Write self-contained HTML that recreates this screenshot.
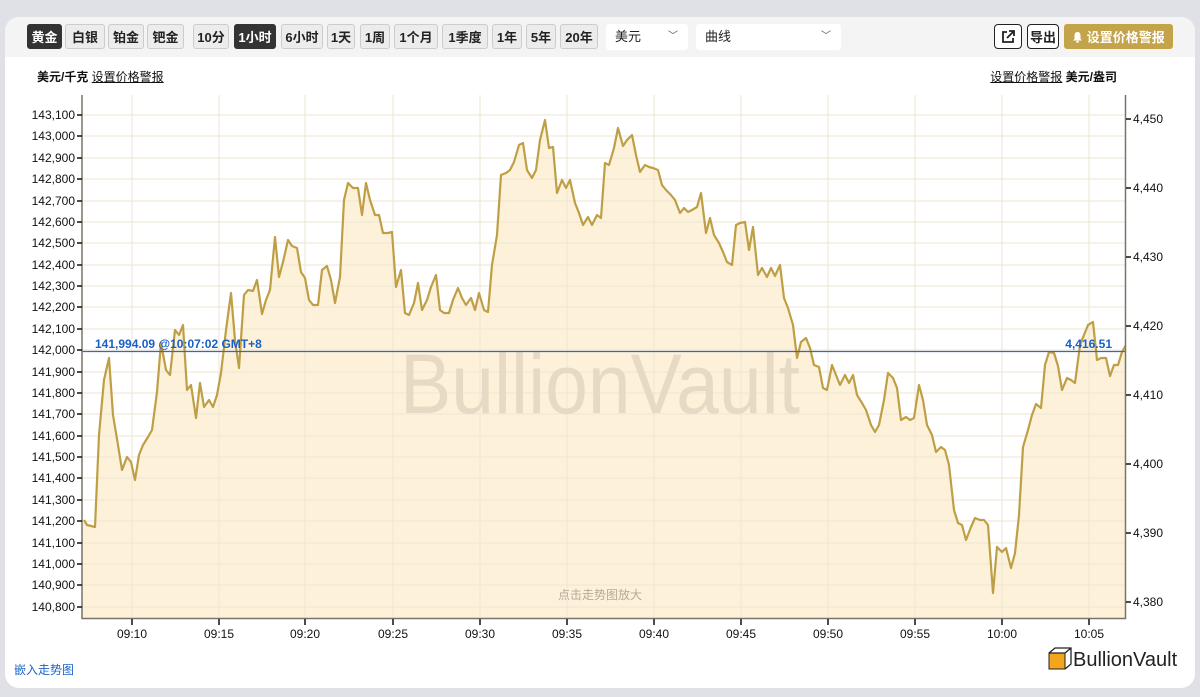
<!DOCTYPE html>
<html><head><meta charset="utf-8"><style>
body{margin:0;width:1200px;height:697px;background:#e0e1e6;overflow:hidden;font-family:"Liberation Sans","Noto Sans CJK SC",sans-serif}
.card{position:absolute;left:5px;top:17px;width:1190px;height:671px;background:#fff;border-radius:14px;overflow:hidden}
.bar{position:absolute;left:0;top:0;width:1190px;height:40px;background:#f4f4f4}
.b{position:absolute;top:7px;height:25px;line-height:25px;border:1px solid #ccc;border-radius:3px;background:#ececec;font-size:13px;font-weight:bold;color:#222;text-align:center;box-sizing:border-box}
.on{background:#333;color:#fff;border-color:#333}
.sel{position:absolute;top:7px;height:26px;background:#fff;border-radius:3px;font-size:13px;line-height:26px;padding-left:9px;box-sizing:border-box;color:#222}
.sel span{position:absolute;right:10px;top:0;font-size:10px;color:#555}
</style></head><body>
<div class="card">
<div class="bar">
<div class="b on" style="left:22px;width:35px">黄金</div>
<div class="b" style="left:60px;width:40px">白银</div>
<div class="b" style="left:103px;width:36px">铂金</div>
<div class="b" style="left:142px;width:37px">钯金</div>
<div class="b" style="left:188px;width:36px">10分</div>
<div class="b on" style="left:229px;width:42px">1小时</div>
<div class="b" style="left:276px;width:42px">6小时</div>
<div class="b" style="left:322px;width:28px">1天</div>
<div class="b" style="left:355px;width:30px">1周</div>
<div class="b" style="left:389px;width:44px">1个月</div>
<div class="b" style="left:437px;width:46px">1季度</div>
<div class="b" style="left:487px;width:30px">1年</div>
<div class="b" style="left:521px;width:30px">5年</div>
<div class="b" style="left:555px;width:38px">20年</div>
<div class="sel" style="left:601px;width:82px">美元<span>﹀</span></div>
<div class="sel" style="left:691px;width:145px">曲线<span>﹀</span></div>
<div class="b" style="left:989px;width:28px;background:#fff;border:1.5px solid #222;border-radius:4px">
<svg width="16" height="16" viewBox="0 0 16 16" style="margin-top:4px"><path d="M7 3H3v10h10V9" fill="none" stroke="#222" stroke-width="1.8"/><path d="M9 2h5v5M14 2L7 9" fill="none" stroke="#222" stroke-width="1.8"/></svg></div>
<div class="b" style="left:1022px;width:32px;background:#fff;border:1.5px solid #222;border-radius:4px">导出</div>
<div class="b" style="left:1059px;width:109px;background:#c4a44a;border-color:#c4a44a;color:#fff"><svg width="11" height="12" viewBox="0 0 11 12" style="vertical-align:-1px"><path d="M5.5 1C3 1 2.5 3 2.5 5V8L1 9.5H10L8.5 8V5C8.5 3 8 1 5.5 1Z" fill="#fff"/><circle cx="5.5" cy="10.8" r="1.2" fill="#fff"/></svg> 设置价格警报</div>
</div>
<div style="position:absolute;left:32px;top:51px;font-size:12px;font-weight:bold;color:#111">美元/千克 <u style="font-weight:normal">设置价格警报</u></div>
<div style="position:absolute;right:78px;top:51px;font-size:12px;color:#111"><u>设置价格警报</u> <b>美元/盎司</b></div>
<div style="position:absolute;left:9px;top:644px;font-size:12px;color:#1a66c8">嵌入走势图</div>
<div style="position:absolute;left:1042px;top:629px;font-size:20px;color:#222">
<svg width="26" height="26" viewBox="0 0 26 26" style="vertical-align:-6px"><rect x="2" y="7" width="16" height="16" fill="#f3a51c" stroke="#222"/><path d="M2 7l6-5h16v16l-6 5M18 7l6-5M18 7H2" fill="none" stroke="#222" stroke-width="1.3"/></svg>BullionVault</div>
</div>
<svg style="position:absolute;left:0;top:0" width="1200" height="697">
<defs><clipPath id="c"><rect x="82" y="95" width="1043" height="523"/></clipPath></defs>
<rect x="82" y="95" width="1043" height="523" fill="#fff"/>
<g clip-path="url(#c)">
<path d="M84,520 87,525 95,527 99,435 104,380 109,358 113,415 118,445 122,470 127,457 131,462 135,480 139,455 143,445 148,437 152,430 157,392 161,343 166,370 170,375 175,330 179,335 183,325 187,390 191,385 196,418 200,383 204,407 209,400 213,407 217,395 221,373 226,330 231,293 235,340 239,368 244,295 248,290 253,291 257,280 262,314 266,300 270,290 275,237 279,277 283,262 288,240 292,246 297,248 301,272 305,278 309,300 313,305 318,305 322,270 327,266 331,280 335,303 340,277 344,200 348,183 353,188 358,188 362,215 366,183 370,200 375,215 379,215 383,233 388,233 392,232 396,287 401,270 405,313 409,315 414,303 418,283 422,310 427,300 431,287 436,275 440,310 444,313 449,313 453,300 458,288 462,298 466,305 471,298 475,310 479,293 484,310 488,312 492,265 497,235 501,175 506,173 510,170 514,162 519,145 523,143 527,170 532,178 536,170 540,140 545,120 549,148 553,147 557,193 562,180 566,188 570,180 575,203 579,213 583,225 588,217 592,225 597,215 601,218 605,163 609,165 614,148 618,128 623,146 627,140 632,135 636,155 640,172 645,165 649,167 653,168 658,170 662,185 666,190 671,195 675,200 680,213 684,208 688,212 692,210 697,207 701,193 706,233 710,218 714,235 719,243 723,252 727,262 732,265 736,225 740,223 745,222 749,250 753,227 758,275 762,268 767,277 771,268 775,276 780,265 784,298 788,308 793,325 797,358 801,342 806,338 810,348 814,365 819,367 823,388 827,390 832,365 836,375 840,385 845,375 849,383 853,375 857,395 862,403 866,410 871,425 875,432 879,425 884,400 888,373 893,378 897,388 901,420 906,417 910,420 914,418 919,385 923,400 927,425 932,435 936,452 941,447 945,450 949,465 954,510 958,523 962,525 966,540 971,527 975,518 980,520 984,520 988,525 993,593 997,547 1002,552 1006,548 1011,568 1015,553 1019,515 1023,447 1028,430 1032,415 1036,404 1041,408 1045,365 1049,352 1054,353 1058,366 1062,390 1067,378 1071,380 1075,383 1080,345 1084,335 1088,325 1093,322 1097,360 1101,358 1106,358 1110,376 1114,365 1118,365 1122,352 1126,345 1126,618 82,618 82,520Z" fill="#fdf1da"/>
<g stroke="#ede6d6" stroke-width="1">
<path d="M132 95V618M219 95V618M305 95V618M393 95V618M480 95V618M567 95V618M654 95V618M741 95V618M828 95V618M915 95V618M1002 95V618M1089 95V618"/>
<path d="M82 115H1125M82 136H1125M82 158H1125M82 179H1125M82 201H1125M82 222H1125M82 243H1125M82 265H1125M82 286H1125M82 307H1125M82 329H1125M82 350H1125M82 372H1125M82 393H1125M82 414H1125M82 436H1125M82 457H1125M82 478H1125M82 500H1125M82 521H1125M82 543H1125M82 564H1125M82 585H1125M82 607H1125"/>
</g>
<text x="400" y="413" font-size="84" textLength="400" lengthAdjust="spacingAndGlyphs" fill="#e6dac4" font-family="Liberation Sans">BullionVault</text>
<path d="M84,520 87,525 95,527 99,435 104,380 109,358 113,415 118,445 122,470 127,457 131,462 135,480 139,455 143,445 148,437 152,430 157,392 161,343 166,370 170,375 175,330 179,335 183,325 187,390 191,385 196,418 200,383 204,407 209,400 213,407 217,395 221,373 226,330 231,293 235,340 239,368 244,295 248,290 253,291 257,280 262,314 266,300 270,290 275,237 279,277 283,262 288,240 292,246 297,248 301,272 305,278 309,300 313,305 318,305 322,270 327,266 331,280 335,303 340,277 344,200 348,183 353,188 358,188 362,215 366,183 370,200 375,215 379,215 383,233 388,233 392,232 396,287 401,270 405,313 409,315 414,303 418,283 422,310 427,300 431,287 436,275 440,310 444,313 449,313 453,300 458,288 462,298 466,305 471,298 475,310 479,293 484,310 488,312 492,265 497,235 501,175 506,173 510,170 514,162 519,145 523,143 527,170 532,178 536,170 540,140 545,120 549,148 553,147 557,193 562,180 566,188 570,180 575,203 579,213 583,225 588,217 592,225 597,215 601,218 605,163 609,165 614,148 618,128 623,146 627,140 632,135 636,155 640,172 645,165 649,167 653,168 658,170 662,185 666,190 671,195 675,200 680,213 684,208 688,212 692,210 697,207 701,193 706,233 710,218 714,235 719,243 723,252 727,262 732,265 736,225 740,223 745,222 749,250 753,227 758,275 762,268 767,277 771,268 775,276 780,265 784,298 788,308 793,325 797,358 801,342 806,338 810,348 814,365 819,367 823,388 827,390 832,365 836,375 840,385 845,375 849,383 853,375 857,395 862,403 866,410 871,425 875,432 879,425 884,400 888,373 893,378 897,388 901,420 906,417 910,420 914,418 919,385 923,400 927,425 932,435 936,452 941,447 945,450 949,465 954,510 958,523 962,525 966,540 971,527 975,518 980,520 984,520 988,525 993,593 997,547 1002,552 1006,548 1011,568 1015,553 1019,515 1023,447 1028,430 1032,415 1036,404 1041,408 1045,365 1049,352 1054,353 1058,366 1062,390 1067,378 1071,380 1075,383 1080,345 1084,335 1088,325 1093,322 1097,360 1101,358 1106,358 1110,376 1114,365 1118,365 1122,352 1126,345" fill="none" stroke="#bf9f45" stroke-width="2.2" stroke-linejoin="round"/>
<line x1="82" y1="351.5" x2="1125" y2="351.5" stroke="#3568b8" stroke-width="1.3"/>
<text x="95" y="348" font-size="12" font-weight="bold" fill="#1a5fc4">141,994.09 @10:07:02 GMT+8</text>
<text x="1112" y="348" font-size="12" font-weight="bold" fill="#1a5fc4" text-anchor="end">4,416.51</text>
<text x="600" y="599" font-size="12" fill="#b5aa98" text-anchor="middle" font-family="Liberation Sans, Noto Sans CJK SC, sans-serif">点击走势图放大</text>
</g>
<path d="M82 95V618.5H1125.5V95" fill="none" stroke="#7a7468" stroke-width="1.5"/>
<g font-size="12" fill="#111" text-anchor="end">
<text x="75" y="119">143,100</text><text x="75" y="140">143,000</text><text x="75" y="162">142,900</text><text x="75" y="183">142,800</text><text x="75" y="205">142,700</text><text x="75" y="226">142,600</text><text x="75" y="247">142,500</text><text x="75" y="269">142,400</text><text x="75" y="290">142,300</text><text x="75" y="311">142,200</text><text x="75" y="333">142,100</text><text x="75" y="354">142,000</text><text x="75" y="376">141,900</text><text x="75" y="397">141,800</text><text x="75" y="418">141,700</text><text x="75" y="440">141,600</text><text x="75" y="461">141,500</text><text x="75" y="482">141,400</text><text x="75" y="504">141,300</text><text x="75" y="525">141,200</text><text x="75" y="547">141,100</text><text x="75" y="568">141,000</text><text x="75" y="589">140,900</text><text x="75" y="611">140,800</text>
</g>
<g stroke="#111" stroke-width="1.5">
<path d="M77 115h5M77 136h5M77 158h5M77 179h5M77 201h5M77 222h5M77 243h5M77 265h5M77 286h5M77 307h5M77 329h5M77 350h5M77 372h5M77 393h5M77 414h5M77 436h5M77 457h5M77 478h5M77 500h5M77 521h5M77 543h5M77 564h5M77 585h5M77 607h5"/>
<path d="M1126 119h5M1126 188h5M1126 257h5M1126 326h5M1126 395h5M1126 464h5M1126 533h5M1126 602h5"/>
<path d="M132 619v6M219 619v6M305 619v6M393 619v6M480 619v6M567 619v6M654 619v6M741 619v6M828 619v6M915 619v6M1002 619v6M1089 619v6"/>
</g>
<g font-size="12" fill="#111">
<text x="1133" y="123">4,450</text><text x="1133" y="192">4,440</text><text x="1133" y="261">4,430</text><text x="1133" y="330">4,420</text><text x="1133" y="399">4,410</text><text x="1133" y="468">4,400</text><text x="1133" y="537">4,390</text><text x="1133" y="606">4,380</text>
</g>
<g font-size="12" fill="#111" text-anchor="middle">
<text x="132" y="638">09:10</text><text x="219" y="638">09:15</text><text x="305" y="638">09:20</text><text x="393" y="638">09:25</text><text x="480" y="638">09:30</text><text x="567" y="638">09:35</text><text x="654" y="638">09:40</text><text x="741" y="638">09:45</text><text x="828" y="638">09:50</text><text x="915" y="638">09:55</text><text x="1002" y="638">10:00</text><text x="1089" y="638">10:05</text>
</g>
</svg>
</body></html>
